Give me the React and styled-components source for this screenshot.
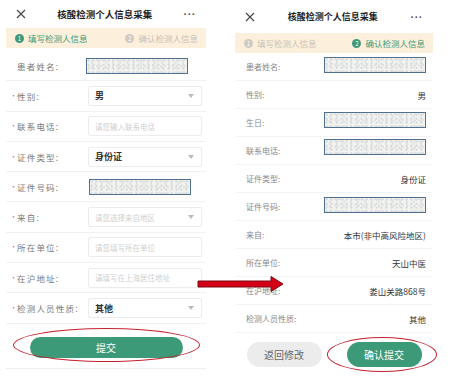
import { styled, createGlobalStyle } from "styled-components"

const GlobalStyle = createGlobalStyle`
    body {
        margin: 0;
        background: #fff;
        font-family: "Noto Sans CJK SC", "Noto Sans", sans-serif;
    }
`

const GREEN = "#3c9a78"

const leftRows = [
    { label: "患者姓名:", blur: { w: 102, dx: -2 } },
    { label: "性别:", req: true, value: "男", select: true },
    { label: "联系电话:", req: true, placeholder: "请您输入联系电话" },
    { label: "证件类型:", req: true, value: "身份证", select: true },
    { label: "证件号码:", req: true, blur: { w: 102, dx: 1 } },
    { label: "来自:", req: true, placeholder: "请您选择来自地区", select: true },
    { label: "所在单位:", req: true, placeholder: "请您填写所在单位" },
    { label: "在沪地址:", req: true, placeholder: "请填写在上海居住地址" },
    { label: "检测人员性质:", req: true, value: "其他", select: true },
]

const rightRows = [
    { label: "患者姓名:", blur: { dx: 2, dy: -2 } },
    { label: "性别:", value: "男" },
    { label: "生日:", blur: { dx: -2, dy: -3 } },
    { label: "联系电话:", blur: { dx: 0, dy: -4 } },
    { label: "证件类型:", value: "身份证" },
    { label: "证件号码:", blur: { dx: 1, dy: -2 } },
    { label: "来自:", value: "本市(非中高风险地区)" },
    { label: "所在单位:", value: "天山中医" },
    { label: "在沪地址:", value: "娄山关路868号" },
    { label: "检测人员性质:", value: "其他" },
]

function CloseIcon() {
    return (
        <svg width="10" height="10" viewBox="0 0 10 10">
            <path d="M1 1 L9 9 M9 1 L1 9" stroke="#444" strokeWidth="1.1" fill="none" />
        </svg>
    )
}

function Steps({ active }) {
    return (
        <StepBar>
            <Step $on={active === 1}><Dot $on={active === 1}>1</Dot>填写检测人信息</Step>
            <Step $on={active === 2}><Dot $on={active === 2}>2</Dot>确认检测人信息</Step>
        </StepBar>
    )
}

export default function App() {
    return (
        <Page>
            <GlobalStyle />
            <Phone $w={200}>
                <Header $h={28}>
                    <CloseIcon />
                    <Title $size={9.5}>核酸检测个人信息采集</Title>
                    <More>···</More>
                </Header>
                <Steps active={1} />
                <LeftList>
                    {leftRows.map((r) => (
                        <FormRow key={r.label}>
                            <FormLabel $req={r.req}>{r.label}</FormLabel>
                            {r.blur ? (
                                <Blur $w={r.blur.w} $dx={r.blur.dx} $dy={0} />
                            ) : (
                                <Field $ph={!!r.placeholder}>
                                    {r.value || r.placeholder}
                                    {r.select && <Caret />}
                                </Field>
                            )}
                        </FormRow>
                    ))}
                </LeftList>
                <LeftFoot>
                    <Circled>
                        <PrimaryBtn $w={153} $h={21}>提交</PrimaryBtn>
                        <Ellipse $l={-17} $t={-9} $w={187} $h={34} />
                    </Circled>
                </LeftFoot>
            </Phone>

            <Phone $w={198}>
                <Header $h={33}>
                    <CloseIcon />
                    <Title $size={9}>核酸检测个人信息采集</Title>
                    <More>···</More>
                </Header>
                <Steps active={2} />
                <RightList>
                    {rightRows.map((r) => (
                        <InfoRow key={r.label}>
                            <InfoLabel>{r.label}</InfoLabel>
                            {r.blur ? (
                                <Blur $w={102} $dx={r.blur.dx} $dy={r.blur.dy} />
                            ) : (
                                <InfoValue>{r.value}</InfoValue>
                            )}
                        </InfoRow>
                    ))}
                </RightList>
                <RightFoot>
                    <GreyBtn>返回修改</GreyBtn>
                    <Circled>
                        <PrimaryBtn $w={75} $h={25}>确认提交</PrimaryBtn>
                        <Ellipse $l={-20} $t={-5} $w={110} $h={35} />
                    </Circled>
                </RightFoot>
            </Phone>

            <Arrow width="88" height="18" viewBox="0 0 88 18">
                <path
                    d="M1 6 L74 6 L74 1.5 L86 9 L74 16.5 L74 12 L1 12 Z"
                    fill="#d40016"
                    stroke="#7a0a12"
                    strokeWidth="1"
                />
            </Arrow>
        </Page>
    )
}

const Page = styled.div`
    position: relative;
    display: flex;
    align-items: flex-start;
    gap: 29px;
    width: 450px;
    height: 385px;
    padding-left: 6px;
    box-sizing: border-box;
    overflow: hidden;
    background: #fff;
`
const Phone = styled.div`
    width: ${(p) => p.$w}px;
    display: flex;
    flex-direction: column;
`
const Header = styled.div`
    height: ${(p) => p.$h}px;
    display: flex;
    align-items: center;
    justify-content: space-between;
    padding: 0 10px 0 10px;
    box-sizing: border-box;
`
const Title = styled.div`
    font-size: ${(p) => p.$size}px;
    font-weight: 700;
    color: #222;
`
const More = styled.div`
    font-family: "Liberation Sans", sans-serif;
    font-size: 11px;
    font-weight: 700;
    color: #555;
    letter-spacing: 0.5px;
`
const StepBar = styled.div`
    height: 20px;
    background: #fcefdb;
    display: flex;
    align-items: center;
    justify-content: space-between;
    padding: 0 8px 0 9px;
`
const Step = styled.div`
    display: flex;
    align-items: center;
    gap: 4px;
    font-size: 8.5px;
    color: ${(p) => (p.$on ? GREEN : "#c8c2b8")};
`
const Dot = styled.span`
    width: 9px;
    height: 9px;
    border-radius: 50%;
    background: ${(p) => (p.$on ? GREEN : "#cfcac2")};
    color: #fff;
    font-size: 6px;
    display: flex;
    align-items: center;
    justify-content: center;
`
const LeftList = styled.div`
    margin-top: 3px;
`
const FormRow = styled.div`
    height: 30.3px;
    display: flex;
    align-items: center;
    padding: 0 4px;
    border-bottom: 1px solid #f1f1f1;
    box-sizing: border-box;
`
const FormLabel = styled.div`
    width: 78px;
    flex-shrink: 0;
    padding-left: 7px;
    box-sizing: border-box;
    position: relative;
    font-size: 8.5px;
    letter-spacing: 1.2px;
    color: #7a7a7a;
    white-space: nowrap;
    &::before {
        content: ${(p) => (p.$req ? '"•"' : '""')};
        position: absolute;
        left: 0;
        top: 0;
        color: #e06a6a;
        font-size: 7px;
    }
`
const Field = styled.div`
    flex: 1;
    height: 18px;
    border: 1px solid #ececec;
    border-radius: 2px;
    display: flex;
    align-items: center;
    justify-content: space-between;
    padding: 0 7px 0 6px;
    font-size: ${(p) => (p.$ph ? 7.5 : 9)}px;
    font-weight: ${(p) => (p.$ph ? 400 : 700)};
    color: ${(p) => (p.$ph ? "#d0d0d0" : "#333")};
    white-space: nowrap;
`
const Caret = styled.span`
    width: 0;
    height: 0;
    border-left: 3.5px solid transparent;
    border-right: 3.5px solid transparent;
    border-top: 4px solid #bbb;
`
const Blur = styled.div`
    width: ${(p) => p.$w}px;
    height: 16px;
    margin-left: ${(p) => p.$dx}px;
    margin-top: ${(p) => p.$dy * 2}px;
    box-sizing: border-box;
    border: 1.5px solid #50708f;
    background-color: #f2f2ef;
    background-image:
        radial-gradient(circle at 30% 40%, #d6dbe0 0.8px, transparent 1.4px),
        radial-gradient(circle at 70% 70%, #dfe2e4 0.9px, transparent 1.5px),
        radial-gradient(circle at 50% 20%, #e2e0da 0.7px, transparent 1.3px);
    background-size: 5px 4px, 7px 5px, 4px 6px;
`
const LeftFoot = styled.div`
    height: 45px;
    padding-top: 13px;
    box-sizing: border-box;
    display: flex;
    justify-content: center;
    border-bottom: 1px solid #eee;
`
const Circled = styled.div`
    position: relative;
`
const PrimaryBtn = styled.div`
    width: ${(p) => p.$w}px;
    height: ${(p) => p.$h}px;
    border-radius: ${(p) => p.$h / 2}px;
    background: ${GREEN};
    color: #fff;
    font-size: 10px;
    display: flex;
    align-items: center;
    justify-content: center;
`
const Ellipse = styled.div`
    position: absolute;
    left: ${(p) => p.$l}px;
    top: ${(p) => p.$t}px;
    width: ${(p) => p.$w}px;
    height: ${(p) => p.$h}px;
    border: 1.3px solid #c4232e;
    border-radius: 50%;
    box-sizing: border-box;
`
const RightList = styled.div`
    padding: 0 1px;
`
const InfoRow = styled.div`
    height: 28px;
    display: flex;
    align-items: center;
    justify-content: space-between;
    padding: 0 6px 0 10px;
    border-bottom: 1px solid #f3f3f3;
    box-sizing: border-box;
`
const InfoLabel = styled.div`
    font-size: 8px;
    color: #888;
    white-space: nowrap;
`
const InfoValue = styled.div`
    font-size: 8.5px;
    color: #333;
    white-space: nowrap;
`
const RightFoot = styled.div`
    display: flex;
    justify-content: center;
    gap: 25px;
    padding-top: 9px;
`
const GreyBtn = styled.div`
    width: 75px;
    height: 25px;
    border-radius: 12.5px;
    background: #ececec;
    color: #666;
    font-size: 10px;
    display: flex;
    align-items: center;
    justify-content: center;
`
const Arrow = styled.svg`
    position: absolute;
    left: 197px;
    top: 275px;
`
